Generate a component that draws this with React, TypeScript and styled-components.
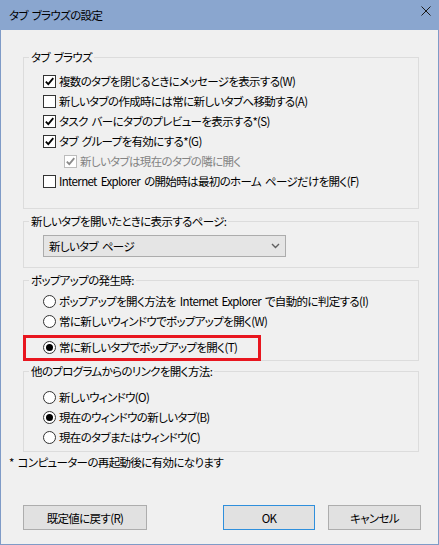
import React from "react";
import styled, { createGlobalStyle } from "styled-components";

const GlobalStyle = createGlobalStyle`
  html, body { margin: 0; padding: 0; background: #f0f0f0; }
  body {
    font-family: "Noto Sans CJK JP", "Noto Sans", sans-serif;
    font-size: 11.5px;
    letter-spacing: -0.65px;
    word-spacing: 2px;
    color: #000;
    font-feature-settings: "palt";
  }
  * { box-sizing: border-box; }
`;

const Window = styled.div`
  width: 439px;
  height: 545px;
  border: 1px solid #7f9bc7;
  border-top: none;
  background: #f0f0f0;
  display: flex;
  flex-direction: column;
`;

const TitleBar = styled.div`
  height: 30px;
  margin: 0 -1px;
  background: #8aa6cf;
  display: flex;
  align-items: center;
  justify-content: space-between;
  padding: 0 8px 0 9px;
  flex-shrink: 0;
`;

const TitleText = styled.span`
  line-height: 14px;
  color: #000;
`;

const CloseButton = styled.div`
  align-self: flex-start;
  margin-top: 6px;
  width: 10px;
  height: 10px;
  display: flex;
`;

const Content = styled.div`
  flex: 1;
  padding: 20px 19px 0 7px;
  display: flex;
  flex-direction: column;
`;

const Groups = styled.div`
  padding-left: 15px;
  display: flex;
  flex-direction: column;
`;

const Group = styled.fieldset<{ $mt?: number }>`
  position: relative;
  margin: ${(p) => p.$mt ?? 0}px 0 0 0;
  padding: 0;
  border: 1px solid #dcdcdc;
  min-width: 0;
`;

const Legend = styled.legend`
  margin-left: 5px;
  padding: 0 2px;
  line-height: 14px;
`;

const GroupBody = styled.div<{ $pt: number; $pb: number }>`
  padding: ${(p) => p.$pt}px 0 ${(p) => p.$pb}px 19px;
  display: flex;
  flex-direction: column;
`;

const Row = styled.label<{ $indent?: number; $mt?: number; $disabled?: boolean }>`
  height: 20px;
  display: flex;
  align-items: center;
  gap: 3px;
  margin-left: ${(p) => p.$indent ?? 0}px;
  margin-top: ${(p) => p.$mt ?? 0}px;
  color: ${(p) => (p.$disabled ? "#838383" : "#000")};
  white-space: nowrap;
  line-height: 14px;
`;

const CheckBox = styled.span<{ $disabled?: boolean }>`
  width: 13px;
  height: 13px;
  flex-shrink: 0;
  background: #fff;
  border: 1px solid ${(p) => (p.$disabled ? "#bcbcbc" : "#333")};
  display: flex;
  align-items: center;
  justify-content: center;
`;

const RadioCircle = styled.span`
  width: 13px;
  height: 13px;
  flex-shrink: 0;
  border-radius: 50%;
  background: #fff;
  border: 1px solid #333;
  display: flex;
  align-items: center;
  justify-content: center;
`;

const RadioDot = styled.span`
  width: 7px;
  height: 7px;
  border-radius: 50%;
  background: #000;
`;

const Select = styled.div`
  width: 243px;
  height: 22px;
  border: 1px solid #acacac;
  background: #e5e5e5;
  display: flex;
  align-items: center;
  justify-content: space-between;
  padding: 0 5px 0 5px;
  line-height: 14px;
`;

const Highlight = styled.div`
  position: absolute;
  left: -1px;
  top: 48px;
  width: 238px;
  height: 26px;
  border: 3px solid #e8161f;
  pointer-events: none;
`;

const Note = styled.div`
  margin-top: 3px;
  line-height: 14px;
  padding-left: 1px;
`;

const Footer = styled.div`
  margin-top: 36px;
  margin-right: -2px;
  padding-left: 15px;
  display: flex;
  gap: 13px;
`;

const Button = styled.button<{ $w: number; $primary?: boolean; $push?: boolean }>`
  width: ${(p) => p.$w}px;
  height: 25px;
  margin-left: ${(p) => (p.$push ? "auto" : "0")};
  padding: 0;
  background: #e1e1e1;
  border: 1px solid ${(p) => (p.$primary ? "#2f8fdc" : "#adadad")};
  font-family: inherit;
  font-size: 11.5px;
  letter-spacing: -0.65px;
  font-feature-settings: "palt";
  color: #000;
`;

const Check = ({ color = "#000" }: { color?: string }) => (
  <svg width="11" height="11" viewBox="0 0 11 11">
    <path d="M1.8 5.6 L4.3 8.1 L9.3 2.2" fill="none" stroke={color} strokeWidth="1.8" />
  </svg>
);

const CheckRow = ({
  label,
  checked,
  disabled,
  indent,
}: {
  label: string;
  checked?: boolean;
  disabled?: boolean;
  indent?: number;
}) => (
  <Row $indent={indent} $disabled={disabled}>
    <CheckBox $disabled={disabled}>{checked && <Check color={disabled ? "#8a8a8a" : "#000"} />}</CheckBox>
    <span>{label}</span>
  </Row>
);

const RadioRow = ({ label, checked, mt }: { label: string; checked?: boolean; mt?: number }) => (
  <Row $mt={mt}>
    <RadioCircle>{checked && <RadioDot />}</RadioCircle>
    <span>{label}</span>
  </Row>
);

export default function App() {
  return (
    <>
      <GlobalStyle />
      <Window>
        <TitleBar>
          <TitleText>タブ ブラウズの設定</TitleText>
          <CloseButton>
            <svg width="10" height="10" viewBox="0 0 10 10">
              <path d="M0.5 0.5 L9.5 9.5 M9.5 0.5 L0.5 9.5" stroke="#1a1a1a" strokeWidth="1" />
            </svg>
          </CloseButton>
        </TitleBar>
        <Content>
          <Groups>
            <Group>
              <Legend>タブ ブラウズ</Legend>
              <GroupBody $pt={7} $pb={17}>
                <CheckRow checked label="複数のタブを閉じるときにメッセージを表示する(W)" />
                <CheckRow label="新しいタブの作成時には常に新しいタブへ移動する(A)" />
                <CheckRow checked label="タスク バーにタブのプレビューを表示する*(S)" />
                <CheckRow checked label="タブ グループを有効にする*(G)" />
                <CheckRow checked disabled indent={21} label="新しいタブは現在のタブの隣に開く" />
                <CheckRow label="Internet Explorer の開始時は最初のホーム ページだけを開く(F)" />
              </GroupBody>
            </Group>
            <Group $mt={5}>
              <Legend>新しいタブを開いたときに表示するページ:</Legend>
              <GroupBody $pt={7} $pb={10}>
                <Select>
                  <span>新しいタブ ページ</span>
                  <svg width="9" height="6" viewBox="0 0 9 6">
                    <path d="M1 1 L4.5 4.5 L8 1" fill="none" stroke="#606060" strokeWidth="1.4" />
                  </svg>
                </Select>
              </GroupBody>
            </Group>
            <Group $mt={5}>
              <Legend>ポップアップの発生時:</Legend>
              <GroupBody $pt={4} $pb={3}>
                <RadioRow label="ポップアップを開く方法を Internet Explorer で自動的に判定する(I)" />
                <RadioRow label="常に新しいウィンドウでポップアップを開く(W)" />
                <RadioRow checked mt={6} label="常に新しいタブでポップアップを開く(T)" />
              </GroupBody>
              <Highlight />
            </Group>
            <Group $mt={3}>
              <Legend>他のプログラムからのリンクを開く方法:</Legend>
              <GroupBody $pt={9} $pb={4}>
                <RadioRow label="新しいウィンドウ(O)" />
                <RadioRow checked label="現在のウィンドウの新しいタブ(B)" />
                <RadioRow label="現在のタブまたはウィンドウ(C)" />
              </GroupBody>
            </Group>
          </Groups>
          <Note>* コンピューターの再起動後に有効になります</Note>
          <Footer>
            <Button $w={124}>既定値に戻す(R)</Button>
            <Button $w={92} $primary $push>
              OK
            </Button>
            <Button $w={93}>キャンセル</Button>
          </Footer>
        </Content>
      </Window>
    </>
  );
}
